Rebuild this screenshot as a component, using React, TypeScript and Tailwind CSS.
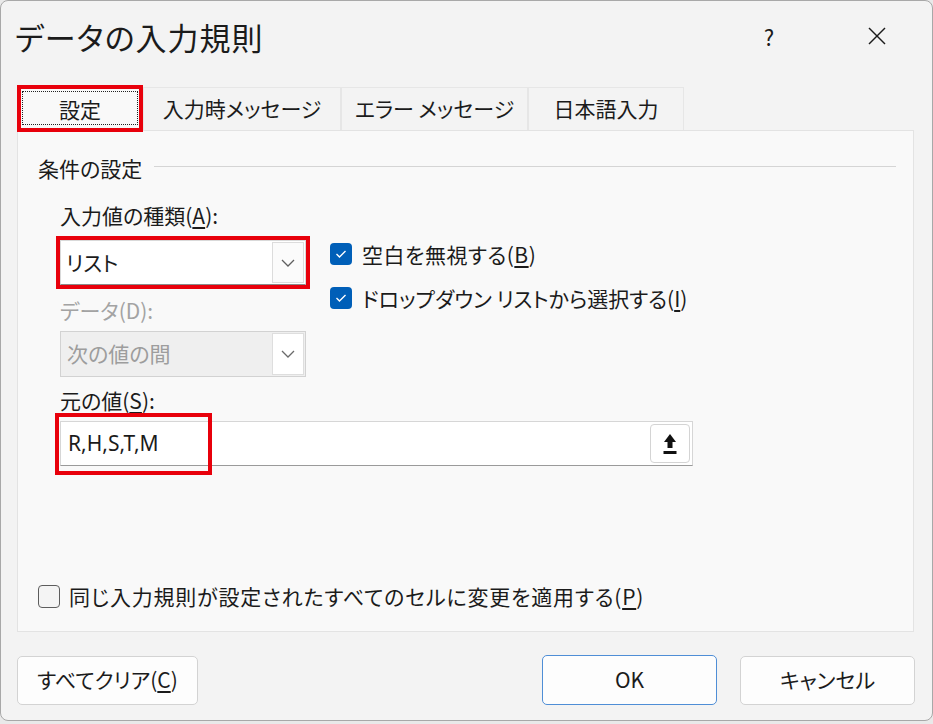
import React from 'react';

const font = "font-['Noto_Sans_CJK_JP','Noto_Sans',sans-serif] [font-feature-settings:'palt']";

// Access key letter, underlined like a Win32 mnemonic
const Key = ({ k }: { k: string }) => (
  <>
    (<span className="underline underline-offset-[3px] decoration-[1.5px]">{k}</span>)
  </>
);

const Chevron = ({ color = '#5f5f5f' }: { color?: string }) => (
  <svg width="14" height="8" viewBox="0 0 14 8" fill="none">
    <polyline points="1,1 7,7 13,1" stroke={color} strokeWidth="1.3" />
  </svg>
);

const Checkbox = ({ checked }: { checked: boolean }) =>
  checked ? (
    <div className="w-[22px] h-[22px] rounded-[4px] bg-[#005fb8] flex items-center justify-center shrink-0">
      <svg width="12" height="10" viewBox="0 0 12 10" fill="none">
        <polyline points="1.5,5 4.5,8 10.5,2" stroke="white" strokeWidth="1.4" />
      </svg>
    </div>
  ) : (
    <div className="w-[22px] h-[23px] rounded-[4px] border-[1.5px] border-[#5d5d5d] bg-[#f4f4f4] shrink-0" />
  );

const tabs = ['入力時メッセージ', 'エラー メッセージ', '日本語入力'];
const tabWidths = ['w-[198px]', 'w-[187px]', 'w-[156px]'];

export default function App() {
  return (
    <div className={`w-[933px] h-[724px] bg-[#e9e9e9] text-[#1b1b1b] ${font}`}>
      <div className="w-[933px] h-[721px] bg-[#f3f3f3] border border-[#a8a8a8] rounded-[8px] flex flex-col">
        {/* Title bar */}
        <div className="h-[70px] flex items-center pl-[14px]">
          <div className="text-[31px] tracking-[1px] leading-none">データの入力規則</div>
          <div className="ml-auto w-[46px] text-center text-[22px]">?</div>
          <div className="ml-[62px] mr-[32px] w-[46px] flex justify-center">
            <svg width="20" height="20" viewBox="0 0 20 20" fill="none">
              <line x1="2" y1="2" x2="18" y2="18" stroke="#1b1b1b" strokeWidth="1.5" />
              <line x1="18" y1="2" x2="2" y2="18" stroke="#1b1b1b" strokeWidth="1.5" />
            </svg>
          </div>
        </div>

        {/* Tabs */}
        <div className="mt-[16px] pl-[16px] flex items-end h-[43px]">
          <div className="relative w-[126px] h-[44px] bg-[#f9f9f9] border-x border-t border-[#e3e3e3] flex items-center justify-center z-10 -mb-px">
            <div className="absolute left-[4px] right-[4px] top-[3px] bottom-[6px] border border-dotted border-[#222]" />
            <span className="text-[21px] pt-[1px]">設定</span>
            <div className="absolute -left-[1px] -top-[3px] w-[126px] h-[47px] border-4 border-[#e8000b]" />
          </div>
          {tabs.map((t, i) => (
            <div
              key={t}
              className={`${tabWidths[i]} h-[43px] bg-[#f3f3f3] border-x border-t border-[#e6e6e6] flex items-center justify-center text-[21px]`}
            >
              {t}
            </div>
          ))}
        </div>

        {/* Settings panel */}
        <div className="ml-[16px] w-[897px] h-[502px] bg-[#f9f9f9] border border-[#e3e3e3] flex flex-col">
          <div className="pt-[22px] pl-[20px] flex items-center">
            <span className="text-[21px] leading-[30px]">条件の設定</span>
            <div className="flex-1 ml-[12px] mr-[17px] h-px bg-[#d5d5d5] mt-[-4px]" />
          </div>

          <div className="pl-[42px]">
            <div className="mt-[17px] text-[21px] leading-[30px]">
              入力値の種類<Key k="A" />:
            </div>

            <div className="flex mt-[10px]">
              <div className="w-[246px]">
                {/* Allow type combo */}
                <div className="h-[45px] bg-white border border-[#d9d9d9] border-b-[#8a8a8a] flex outline-4 outline-[#e8000b]">
                  <div className="flex-1 flex items-center pl-[5px] text-[21px]">リスト</div>
                  <div className="w-[32px] m-[1px] border border-[#dcdcdc] bg-[#fbfbfb] flex items-center justify-center">
                    <Chevron />
                  </div>
                </div>
                <div className="mt-[10px] text-[21px] leading-[30px] text-[#a3a3a3]">データ(D):</div>
                <div className="mt-[6px] h-[46px] bg-[#efefef] border border-[#d2d2d2] flex">
                  <div className="flex-1 flex items-center pl-[6px] text-[21px] text-[#9d9d9d]">次の値の間</div>
                  <div className="w-[32px] m-[1px] bg-white border border-[#dedede] flex items-center justify-center">
                    <Chevron color="#6a6a6a" />
                  </div>
                </div>
              </div>

              <div className="ml-[24px] pt-[3px] flex flex-col gap-[22px]">
                <div className="flex items-center gap-[10px] text-[21px] leading-[22px]">
                  <Checkbox checked />
                  <span className="tracking-[0.5px]">
                    空白を無視する<Key k="B" />
                  </span>
                </div>
                <div className="flex items-center gap-[10px] text-[21px] leading-[22px]">
                  <Checkbox checked />
                  <span>
                    ドロップダウン リストから選択する<Key k="I" />
                  </span>
                </div>
              </div>
            </div>

            <div className="mt-[8px] text-[21px] leading-[30px]">
              元の値<Key k="S" />:
            </div>

            {/* Source field */}
            <div className="relative mt-[6px] w-[633px] h-[45px] bg-white border border-[#d6d6d6] border-b-[#9a9a9a] flex items-center">
              <span className="pl-[7px] text-[21px] font-['Noto_Sans',sans-serif]">R,H,S,T,M</span>
              <div className="ml-auto mr-[2px] w-[40px] h-[39px] rounded-[4px] border border-[#d4d4d4] bg-white flex items-center justify-center">
                <svg width="16" height="22" viewBox="0 0 16 22">
                  <polygon points="8,1 14,9 10.5,9 10.5,15 5.5,15 5.5,9 2,9" fill="#111" />
                  <rect x="1.5" y="18" width="13" height="3" fill="#111" />
                </svg>
              </div>
              <div className="absolute -left-[6px] -top-[9px] w-[157px] h-[62px] border-4 border-[#e8000b]" />
            </div>
          </div>

          <div className="mt-auto mb-[23px] pl-[20px] flex items-center gap-[9px] text-[21px] leading-[24px]">
            <Checkbox checked={false} />
            <span className="tracking-[0.8px]">
              同じ入力規則が設定されたすべてのセルに変更を適用する<Key k="P" />
            </span>
          </div>
        </div>

        {/* Dialog buttons */}
        <div className="mt-[23px] pl-[16px] pr-[17px] flex items-center">
          <button className="w-[181px] h-[49px] bg-[#fdfdfd] border border-[#d3d3d3] rounded-[5px] text-[21px]">
            すべてクリア<Key k="C" />
          </button>
          <button className="ml-auto w-[175px] h-[50px] bg-[#fdfdfd] border-[1.5px] border-[#4f8ed6] rounded-[5px] text-[21px]">
            OK
          </button>
          <button className="ml-[23px] w-[175px] h-[49px] bg-[#fdfdfd] border border-[#d3d3d3] rounded-[5px] text-[21px]">
            キャンセル
          </button>
        </div>
      </div>
    </div>
  );
}
